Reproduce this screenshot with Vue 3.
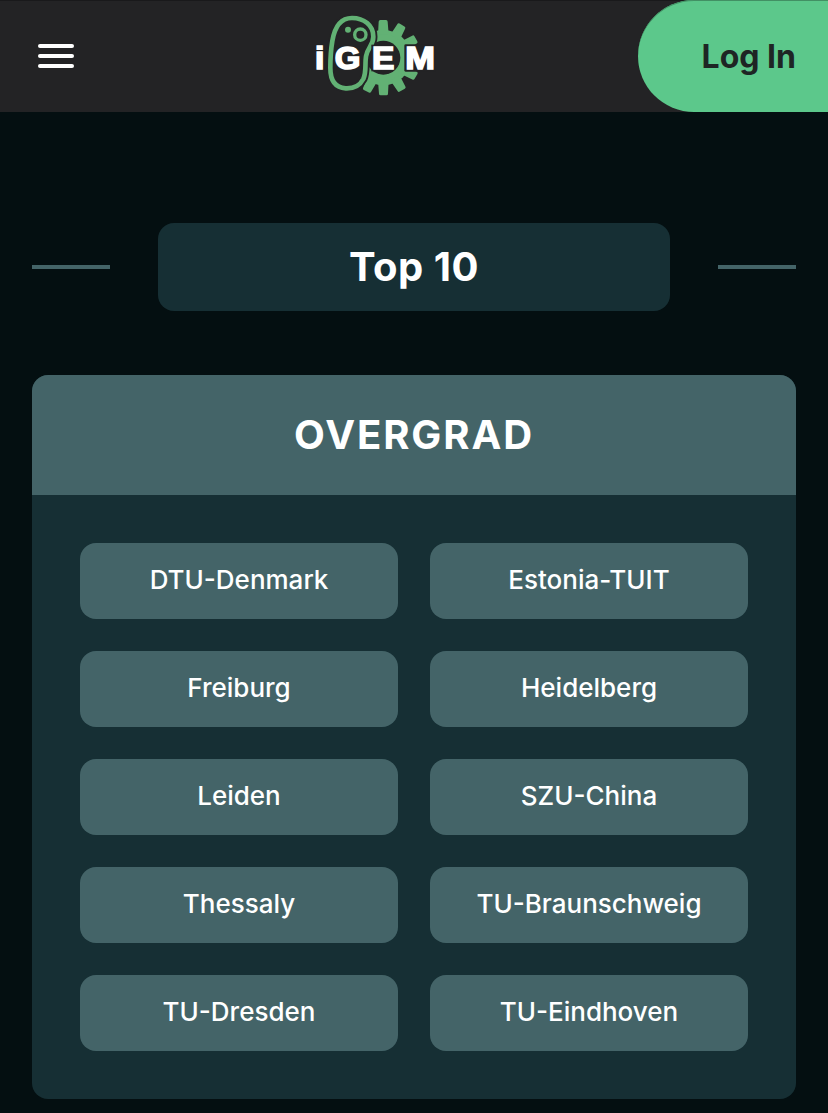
<template>
    <div class="page">
        <header class="navbar">
            <button class="burger" aria-label="Menu">
                <span></span>
                <span></span>
                <span></span>
            </button>
            <svg class="logo" viewBox="0 0 420 300" role="img" aria-label="iGEM">
                <g class="gear">
                    <circle cx="235" cy="158" r="83" />
                    <path v-for="angle in teeth" :key="angle" d="M219 88L221 50Q221 45 226 45H243Q248 45 248 50L251 88Z" :transform="`rotate(${angle} 235 158)`" />
                </g>
                <circle class="hole" cx="235" cy="158" r="51" />
                <rect class="hole" x="298" y="118" width="94" height="82" rx="4" />
                <path class="cell-gap" :d="cell" />
                <path class="cell" :d="cell" />
                <circle class="dot" cx="129" cy="74" r="9" />
                <circle class="ring" cx="166" cy="89" r="17" />
                <rect class="hole" x="199" y="119" width="30" height="80" />
                <g class="letters">
                    <text x="30" y="192" textLength="28" lengthAdjust="spacingAndGlyphs">i</text>
                    <text x="89" y="192" textLength="77" lengthAdjust="spacingAndGlyphs">G</text>
                    <text x="201" y="192" textLength="67" lengthAdjust="spacingAndGlyphs">E</text>
                    <text x="301" y="192" textLength="89" lengthAdjust="spacingAndGlyphs">M</text>
                </g>
            </svg>
            <button class="login">Log In</button>
        </header>

        <main class="content">
            <div class="heading">
                <span class="line"></span>
                <h1>Top 10</h1>
                <span class="line"></span>
            </div>

            <section class="card">
                <h2>OVERGRAD</h2>
                <ul class="teams">
                    <li v-for="team in teams" :key="team">{{ team }}</li>
                </ul>
            </section>
        </main>
    </div>
</template>

<script setup>
const teams = [
    "DTU-Denmark",
    "Estonia-TUIT",
    "Freiburg",
    "Heidelberg",
    "Leiden",
    "SZU-China",
    "Thessaly",
    "TU-Braunschweig",
    "TU-Dresden",
    "TU-Eindhoven",
];

const teeth = [0, 30, 60, 120, 150, 180, 207];

const cell = "M141 39C177 39 205 61 205 95C205 122 187 128 183 154C179 181 185 199 175 222C165 241 145 251 122 250C89 248 76 224 76 189C76 160 77 138 82 108C89 66 107 39 141 39Z";
</script>

<style>
body {
    background: #040f11;
}
</style>

<style scoped>
.page {
    min-height: 1113px;
    font-family: Inter, "Liberation Sans", sans-serif;
    color: #fff;
    background: #040f11;
}

.navbar {
    display: grid;
    grid-template-columns: 305px 140px 1fr;
    align-items: center;
    height: 112px;
    background: #232325;
    box-shadow: inset 0 1px 0 #19191b;
}

.burger {
    display: flex;
    flex-direction: column;
    gap: 6px;
    width: 36px;
    margin-left: 38px;
    padding: 0;
    border: none;
    background: none;
}

.burger span {
    height: 4px;
    border-radius: 2px;
    background: #fff;
}

.logo {
    display: block;
    width: 140px;
    height: 100px;
    margin-bottom: 2px;
}

.gear,
.dot {
    fill: #62b174;
}

.hole {
    fill: #232325;
}

.cell-gap {
    fill: #232325;
    stroke: #232325;
    stroke-width: 25;
}

.cell {
    fill: none;
    stroke: #62b174;
    stroke-width: 14;
}

.ring {
    fill: none;
    stroke: #62b174;
    stroke-width: 10;
}

.letters {
    font-family: "Liberation Sans", Arial, sans-serif;
    font-size: 96px;
    font-weight: 700;
    fill: #fff;
    stroke: #fff;
    stroke-width: 5;
}

.login {
    justify-self: end;
    width: 190px;
    height: 112px;
    padding: 0 32px 0 0;
    border: none;
    border-radius: 56px 0 0 56px;
    background: #5cc88b;
    box-shadow: inset 0 1px 0 #429064;
    color: #1e2524;
    font: inherit;
    font-size: 32px;
    font-weight: 700;
    text-align: right;
}

.content {
    padding: 111px 32px 14px;
}

.heading {
    display: flex;
    align-items: center;
    gap: 48px;
    margin-bottom: 64px;
}

.line {
    flex: 1;
    height: 4px;
    background: #446468;
}

h1 {
    width: 512px;
    margin: 0;
    border-radius: 16px;
    background: #162f34;
    font-size: 40px;
    font-weight: 700;
    line-height: 88px;
    letter-spacing: 0.5px;
    text-align: center;
}

.card {
    border-radius: 16px;
    overflow: hidden;
    background: #162f34;
}

h2 {
    margin: 0;
    background: #446468;
    font-size: 40px;
    font-weight: 700;
    line-height: 120px;
    letter-spacing: 1.9px;
    text-align: center;
}

.teams {
    display: grid;
    grid-template-columns: 1fr 1fr;
    gap: 32px;
    margin: 0;
    padding: 48px;
    list-style: none;
}

.teams li {
    height: 76px;
    border-radius: 16px;
    background: #446468;
    font-size: 26px;
    font-weight: 450;
    line-height: 74px;
    text-align: center;
}
</style>
